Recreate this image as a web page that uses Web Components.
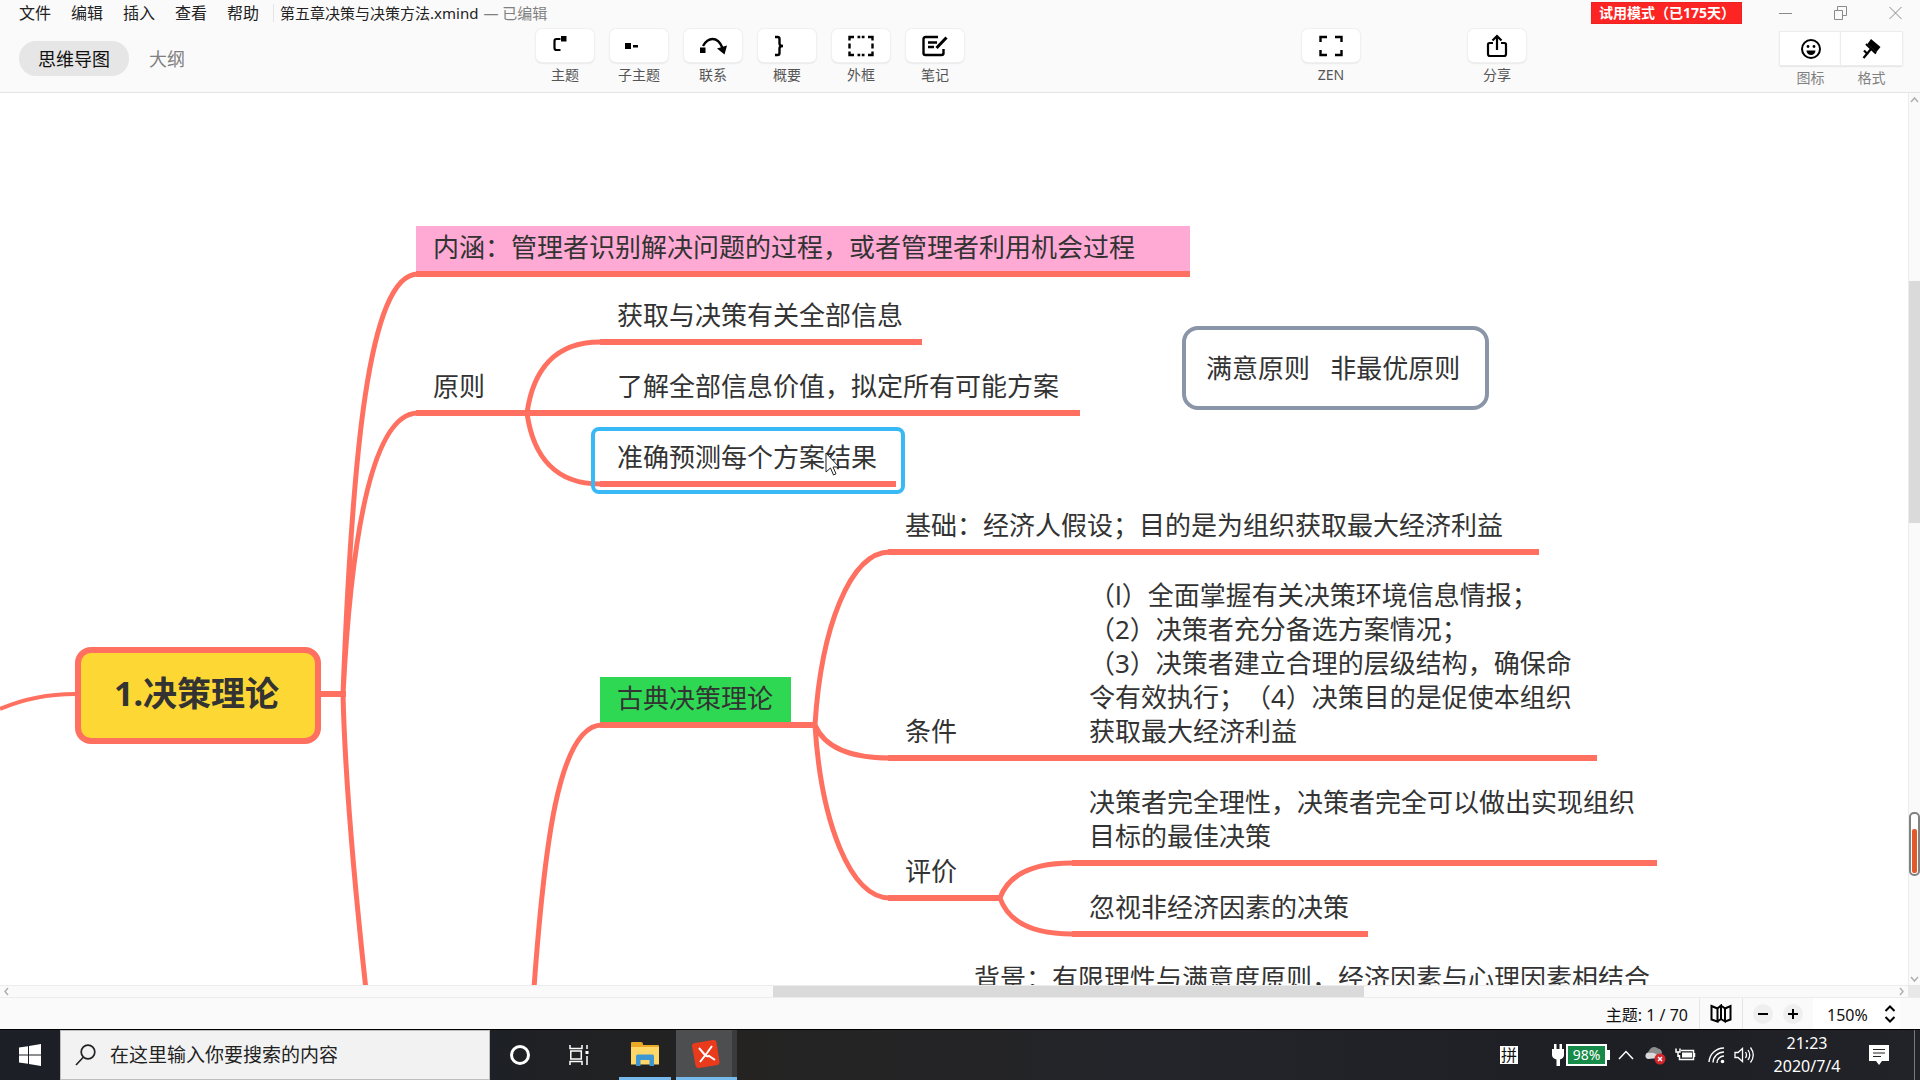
<!DOCTYPE html>
<html lang="zh-CN">
<head>
<meta charset="utf-8">
<title>第五章决策与决策方法.xmind</title>
<style>
html, body { margin: 0; height: 100%; overflow: hidden; }
body {
  font-family: "Noto Sans", "Noto Sans CJK SC", sans-serif;
  font-size: 16px;
  color: #222;
  text-spacing-trim: space-all;
}
</style>
</head>
<body>
<mind-app></mind-app>

<script>
const RESET = `
  *, *::before, *::after { box-sizing: border-box; }
  button, input, select { font: inherit; color: inherit; border: 0; background: none; padding: 0; margin: 0; border-radius: 0; outline: 0; }
  svg { display: block; flex: none; }
`;

function define(name, markup, setup) {
  const tpl = document.createElement('template');
  tpl.innerHTML = markup.replace('<style>', '<style>' + RESET);
  customElements.define(name, class extends HTMLElement {
    constructor() {
      super();
      this.attachShadow({ mode: 'open' }).append(tpl.content.cloneNode(true));
    }
    connectedCallback() { if (setup) setup(this, this.shadowRoot); }
  });
}

/* ---------- menu and title ---------- */
define('menu-bar', `
<style>
  :host { display: flex; align-items: center; height: 26px; padding-left: 19px; }
  nav { display: flex; gap: 20px; }
  button { line-height: 24px; white-space: nowrap; }
  .title { display: flex; gap: 5px; margin-left: 14px; padding-left: 6px; border-left: 1px solid #e4e4e4; font-size: 15px; line-height: 18px; white-space: nowrap; }
  .state { color: #808080; }
  .space { flex: 1; }
  .trial { width: 151px; padding-left: 7px; margin-right: 37px; background: #fd2424; border: 1px solid #e22; color: #fff; font-size: 14px; font-weight: 700; line-height: 20px; white-space: nowrap; }
  .win { display: flex; align-items: center; gap: 42px; padding-right: 18px; }
  .win svg { fill: none; stroke: #8a8a8a; stroke-width: 1; }
</style>
<nav aria-label="菜单">
  <button>文件</button><button>编辑</button><button>插入</button><button>查看</button><button>帮助</button>
</nav>
<div class="title"><span>第五章决策与决策方法.xmind</span><span class="state">— 已编辑</span></div>
<div class="space"></div>
<div class="trial">试用模式（已175天）</div>
<div class="win">
  <button aria-label="最小化"><svg width="13" height="14"><path d="M0 7.5H13"/></svg></button>
  <button aria-label="还原"><svg width="13" height="14"><path d="M.5 4.5h8v9h-8zM3.500 4.500v-4h9v9h-4"/></svg></button>
  <button aria-label="关闭"><svg width="13" height="14"><path d="M.5 1l12 12M12.500 1l-12 12"/></svg></button>
</div>
`);

/* ---------- toolbar ---------- */
define('view-tabs', `
<style>
  :host { display: flex; align-items: center; gap: 20px; font-size: 18px; margin-top: 12px; height: 35px; }
  button { line-height: 33px; padding-top: 2px; white-space: nowrap; color: #808080; }
  .on { width: 110px; border-radius: 17px; background: #e6e6e6; color: #111; }
</style>
<button class="on">思维导图</button><button>大纲</button>
`);

define('tool-button', `
<style>
  :host { display: flex; flex-direction: column; align-items: center; width: 58px; }
  button { display: flex; flex-direction: column; align-items: center; width: 100%; gap: 4px; }
  .face { display: flex; align-items: center; justify-content: center; width: 100%; height: 33px; background: #fff; border-radius: 6px; box-shadow: 0 0 0 1px #f0f0f0, 0 1px 2px #c8c8c8; }
  .label { font-size: 14px; line-height: 18px; color: #555; white-space: nowrap; }
  ::slotted(svg) { display: block; }
</style>
<button><span class="face"><slot name="icon"></slot></span><span class="label"><slot></slot></span></button>
`);

define('panel-switch', `
<style>
  :host { display: flex; margin-top: 3px; }
  button { width: 61px; display: flex; flex-direction: column; gap: 4px; }
  .face { display: flex; align-items: center; justify-content: center; width: 100%; height: 33px; background: #fff; box-shadow: 0 0 0 1px #ececec, 0 1px 2px #c4c4c4; }
  .label { width: 100%; text-align: center; font-size: 14px; line-height: 18px; color: #808080; }
</style>
<button><span class="face">
  <svg width="22" height="22" fill="none" stroke="#000" stroke-width="2"><circle cx="11" cy="11" r="9"/><path d="M6.500 12.500h9a4.500 4.500 0 0 1-9 0z" fill="#000" stroke="none"/><circle cx="8" cy="8.500" r="1.400" fill="#000" stroke="none"/><circle cx="14" cy="8.500" r="1.400" fill="#000" stroke="none"/></svg>
</span><span class="label">图标</span></button>
<button><span class="face">
  <svg width="22" height="22"><path d="M10 1l9.500 8-4.500 5.500L6.500 6z"/><path d="M5 6l10 9.500M10 11L2.500 20M3 12.500l4 4" fill="none" stroke="#000" stroke-width="2.200"/></svg>
</span><span class="label">格式</span></button>
`);

define('tool-bar', `
<style>
  :host { display: flex; align-items: flex-start; padding: 3px 18px 0 19px; height: 66px; }
  .group { display: flex; gap: 16px; }
  .s { flex: 1 1 0; }
  view-tabs { width: 166px; }
</style>
<view-tabs></view-tabs>
<div class="s" style="flex-grow:351"></div>
<div class="group">
  <tool-button><svg slot="icon" width="28" height="22" fill="none" stroke="#000" stroke-width="2.200"><path d="M9.500 4H5.500Q3.500 4 3.500 6v7q0 2 2 2h4"/><path d="M10 1h5.500v5.500H10z" fill="#000" stroke="none"/></svg>主题</tool-button>
  <tool-button><svg slot="icon" width="28" height="22"><path d="M0 8h6v6H0zM8 10h5v2.500H8z"/></svg>子主题</tool-button>
  <tool-button><svg slot="icon" width="28" height="22"><path d="M1 12.500h5.500v5.500H1z"/><path d="M4 11Q8 4 13.500 4 20 4 23.500 13" fill="none" stroke="#000" stroke-width="2.400"/><path d="M18 13.500l10-3-2.500 9z"/></svg>联系</tool-button>
  <tool-button><svg slot="icon" width="28" height="22" fill="none" stroke="#000" stroke-width="2.400"><path d="M2 2h2.500Q6.500 2 6.500 4v4.500Q6.500 11 10 11 6.500 11 6.500 13.500V18q0 2-2 2H2"/></svg>概要</tool-button>
  <tool-button><svg slot="icon" width="26" height="22" fill="none" stroke="#000" stroke-width="2.400"><path d="M1.500 5.500V2H6M9.500 2h7M20 2h4.500v3.500M24.500 8.500v5M24.500 16.500V20H20M16.500 20h-7M6 20H1.500v-3.500M1.500 13.500v-5"/><path d="M13 0v4M13 18v4" stroke="#fff" stroke-width="1.500"/></svg>外框</tool-button>
  <tool-button><svg slot="icon" width="26" height="22" fill="none" stroke="#000" stroke-width="2.400"><path d="M16 2H3.500Q1.500 2 1.500 4v14q0 2 2 2h16q2 0 2-2v-4"/><path d="M6 7.500h9M6 12h6"/><path d="M24.500 2.500L14.500 13" stroke-width="3"/></svg>笔记</tool-button>
</div>
<div class="s" style="flex-grow:338"></div>
<tool-button><svg slot="icon" width="24" height="22" fill="none" stroke="#000" stroke-width="2.400"><path d="M1.500 7V2H8M16 2h6.500v5M22.500 15v5H16M8 20H1.500v-5"/></svg>ZEN</tool-button>
<div class="s" style="flex-grow:108"></div>
<tool-button><svg slot="icon" width="22" height="24" fill="none" stroke="#000" stroke-width="2.200"><path d="M7 9H3.500Q2 9 2 10.500V20q0 2 2 2h14q2 0 2-2v-9.500Q20 9 18.500 9H15"/><path d="M11 16V2.500M6.500 6.500L11 2l4.500 4.500"/></svg>分享</tool-button>
<div class="s" style="flex-grow:254"></div>
<panel-switch></panel-switch>
`);

/* ---------- mind map canvas ---------- */
define('map-topic', `
<style>
  :host { display: block; position: absolute; box-sizing: border-box; color: #333; font-size: 26px; line-height: 34px; }
  .text { padding: 4px 0 7px var(--indent, 17px); white-space: pre; background: var(--fill, transparent); }
  .rule { height: 6px; background: #ff7060; }
</style>
<div class="text"><slot></slot></div><div class="rule"></div>
`, el => {
  el.style.left = el.getAttribute('x') + 'px';
  el.style.top = el.getAttribute('y') + 'px';
  el.style.width = el.getAttribute('w') + 'px';
});

define('mind-map', `
<style>
  :host { display: block; position: relative; overflow: hidden; background: #fff; flex: 1; min-width: 0; }
  .links { position: absolute; left: 0; top: 0; fill: none; stroke: #ff7060; stroke-width: 5; }
  .root, .float, .focus, .pointer { position: absolute; }
  .root { left: 75px; top: 554px; width: 246px; height: 97px; border: 6px solid #ff7060; border-radius: 16px; background: #fdd835; color: #333; font-size: 34px; font-weight: 700; line-height: 80px; padding-left: 33px; white-space: nowrap; }
  .float { left: 1182px; top: 233px; width: 307px; height: 84px; border: 4px solid #8a96a8; border-radius: 16px; color: #333; font-size: 26px; line-height: 76px; padding-left: 20px; white-space: pre; }
  .focus { left: 591px; top: 334px; width: 314px; height: 67px; border: 4px solid #38b8f5; border-radius: 8px; }
  .pointer { left: 825px; top: 359px; }
</style>
<svg class="links" width="1920" height="900">
  <path d="M0 616Q35 601 75 601" stroke-width="4"/>
  <path d="M320 601H346" stroke-width="6"/>
  <path d="M343 601C352 367 368 181 418 181M343 601C352 427 375 320 418 320M343 601C345 687 354 787 366 897"/>
  <path d="M527 320C533 277 555 249 600 249M527 320C533 363 555 391 600 391"/>
  <path d="M602 632C558 632 544 757 534 895"/>
  <path d="M815 632C821 535 850 459 890 459M815 632C823 651 845 665 890 665M815 632C821 729 850 805 890 805"/>
  <path d="M1000 805C1008 783 1030 770 1072 770M1000 805C1008 828 1030 841 1072 841"/>
  <path d="M791 632H817" stroke-width="6"/>
</svg>
<div class="root">1.决策理论</div>
<map-topic x="416" y="133" w="774" style="--fill:#ffaad5">内涵：管理者识别解决问题的过程，或者管理者利用机会过程</map-topic>
<map-topic x="416" y="272" w="112">原则</map-topic>
<map-topic x="600" y="201" w="322">获取与决策有关全部信息</map-topic>
<map-topic x="527" y="272" w="553" style="--indent:90px">了解全部信息价值，拟定所有可能方案</map-topic>
<map-topic x="600" y="343" w="296">准确预测每个方案结果</map-topic>
<div class="focus"></div>
<map-topic x="600" y="584" w="191" style="--fill:#2fd852">古典决策理论</map-topic>
<map-topic x="888" y="411" w="651">基础：经济人假设；目的是为组织获取最大经济利益</map-topic>
<map-topic x="888" y="617" w="190">条件</map-topic>
<map-topic x="1072" y="481" w="525">（l）全面掌握有关决策环境信息情报；
（2）决策者充分备选方案情况；
（3）决策者建立合理的层级结构，确保命
令有效执行；（4）决策目的是促使本组织
获取最大经济利益</map-topic>
<map-topic x="888" y="757" w="112">评价</map-topic>
<map-topic x="1072" y="688" w="585">决策者完全理性，决策者完全可以做出实现组织
目标的最佳决策</map-topic>
<map-topic x="1072" y="793" w="296">忽视非经济因素的决策</map-topic>
<map-topic x="957" y="864" w="720">背景：有限理性与满意度原则，经济因素与心理因素相结合</map-topic>
<div class="float">满意原则   非最优原则</div>
<svg class="pointer" width="16" height="24"><path d="M1 1v19l4.500-4 3 7 2.500-1.200-3-6.800h6z" fill="#fff" stroke="#222"/></svg>
`);

define('scroll-rail', `
<style>
  :host { display: flex; background: #fafafa; }
  :host([axis="y"]) { flex-direction: column; width: 12px; border-left: 1px solid #ececec; }
  :host([axis="x"]) { height: 12px; border-top: 1px solid #ececec; flex: 1; }
  svg { fill: none; stroke: #b0b0b0; stroke-width: 1.500; }
  i { display: block; flex-basis: 0; }
  .thumb { background: #dadada; }
</style>
<svg width="11" height="11"><path class="p"/></svg><i class="a"></i><i class="thumb"></i><i class="b"></i><svg width="11" height="11"><path class="n"/></svg>
`, (el, root) => {
  const vertical = el.getAttribute('axis') === 'y';
  root.querySelector('.p').setAttribute('d', vertical ? 'M2 9l3.500-4L9 9' : 'M8 2L5 5.500 8 9');
  root.querySelector('.n').setAttribute('d', vertical ? 'M2 3l3.500 4L9 3' : 'M3 2l3 3.500L3 9');
  const [a, t, b] = el.getAttribute('parts').split(' ');
  root.querySelector('.a').style.flexGrow = a;
  root.querySelector('.thumb').style.flexGrow = t;
  root.querySelector('.b').style.flexGrow = b;
});

define('level-gauge', `
<style>
  :host { display: block; position: absolute; box-sizing: border-box; right: 0; top: 719px; width: 11px; height: 64px; border: 2px solid #828282; border-radius: 5px; background: #fff; }
  i { position: absolute; left: 1px; right: 1px; top: 15px; bottom: 1px; border-radius: 2px; background: #e25a2b; }
</style>
<i></i>
`);

/* ---------- status bar ---------- */
define('status-bar', `
<style>
  :host { display: flex; align-items: stretch; justify-content: flex-end; height: 31px; padding-right: 20px; background: #fafafa; font-size: 16px; color: #111; }
  .count { line-height: 34px; padding-right: 11px; white-space: nowrap; }
  .map { display: flex; align-items: center; justify-content: center; width: 44px; border: solid #e6e6e6; border-width: 0 1px; }
  .zoom { display: flex; align-items: center; gap: 10px; padding: 0 10px; }
  .zoom button { width: 20px; height: 20px; border-radius: 10px; background: #efefef; }
  .level { position: relative; display: flex; background: #fff; width: 87px; }
  select { appearance: none; width: 100%; padding-left: 14px; line-height: 20px; padding-top: 3px; }
  .level svg { position: absolute; right: 4px; top: 7px; pointer-events: none; }
  svg { fill: none; stroke: #000; stroke-width: 2; }
</style>
<span class="count">主题: 1 / 70</span>
<button class="map" aria-label="导航图"><svg width="22" height="20"><path d="M1.500 2l6 2.500v13l-6-2zM7.500 4.500L11 1.500v13.500l-3.500 2.500M11 1.500l4 3v13L11 15M15 4.500l5.500-2.500v13.500l-5.500 2"/></svg></button>
<div class="zoom">
  <button aria-label="缩小"><svg width="20" height="20"><path d="M5 10h10"/></svg></button>
  <button aria-label="放大"><svg width="20" height="20"><path d="M5 10h10M10 5v10"/></svg></button>
</div>
<label class="level"><select aria-label="缩放"><option>150%</option></select>
<svg width="12" height="18"><path d="M1.500 6L6 1.500 10.500 6M1.500 12L6 16.500 10.500 12"/></svg></label>
`);

/* ---------- Windows task bar ---------- */
define('task-bar', `
<style>
  :host { display: flex; box-sizing: border-box; height: 51px; border-top: 1px solid #000; background: linear-gradient(90deg, #1c1f25 0, #1d2025 25%, #242322 38%, #24252a 60%, #1e1f24 85%, #222328 100%); color: #fff; align-items: stretch; }
  button { display: flex; align-items: center; justify-content: center; }
  .start { width: 60px; }
  .search { display: flex; align-items: center; width: 430px; background: #f2f2f2; border: 1px solid #bdbdbd; color: #222; padding-left: 14px; gap: 14px; }
  .search input { flex: 1; min-width: 0; font-size: 19px; line-height: 28px; }
  .search input::placeholder { color: #222; opacity: 1; }
  .cortana { width: 60px; }
  .view { width: 59px; }
  .app { width: 52px; margin-left: 10px; border-bottom: 3px solid #76b9ed; }
  .xmind { width: 61px; margin-left: 5px; padding-right: 2px; background: linear-gradient(90deg, #4d4e50 0 56px, #3a3b3d 56px); }
  .space { flex: 1; }
  .tray { display: flex; align-items: center; }
  .ime { width: 18px; height: 18px; background: #fff; color: #111; font-size: 16px; line-height: 18px; text-align: center; margin-right: 34px; }
  .plug { margin-right: 2px; }
  .bat { width: 41px; height: 22px; border: 2px solid #fff; background: #168a48; font-size: 14px; line-height: 18px; text-align: center; }
  .nub { width: 3px; height: 10px; background: #fff; margin-right: 8px; }
  .clock { width: 80px; margin-left: 11px; text-align: center; font-size: 16px; line-height: 23px; white-space: nowrap; }
  .note { margin-left: 22px; width: 20px; }
  .edge { width: 1px; align-self: stretch; background: #77787c; margin: 0 5px 0 25px; }
  .ln { fill: none; stroke: #fff; }
  .t8 { margin-left: 8px; }
  .t11 { margin-left: 11px; }
</style>
<button class="start" aria-label="开始"><svg width="22" height="22" fill="#fff"><path d="M0 3.500l9-1.300v8.300H0zM10 2l12-2v10.500H10zM0 11.500h9v8.300l-9-1.300zM10 11.500h12V22l-12-2z"/></svg></button>
<label class="search"><svg width="21" height="22" fill="none" stroke="#222" stroke-width="1.700"><circle cx="13" cy="8" r="6.800"/><path d="M8.500 13L1 21"/></svg><input type="text" aria-label="搜索" placeholder="在这里输入你要搜索的内容"></label>
<button class="cortana" aria-label="Cortana"><svg width="22" height="22" fill="none" stroke="#fff" stroke-width="3"><circle cx="11" cy="11" r="8.500"/></svg></button>
<button class="view" aria-label="任务视图"><svg class="ln" width="21" height="20" stroke-width="1.500"><path d="M1 0v3.500h12V0M1 20v-3.500h12V20M1.800 6h10.500v8H1.800zM18 0v4M18 11v9"/><path d="M16.500 6h3v3h-3z" fill="#fff" stroke="none"/></svg></button>
<button class="app" aria-label="文件资源管理器"><svg width="28" height="24"><path d="M0 1q0-1 1-1h9q2 0 2 2v1h15q1 0 1 1v18H0z" fill="#e9a927"/><path d="M0 5h28v17.500H0z" fill="#fdd868"/><path d="M5 24V14q0-1.500 1.500-1.500h15Q23 12.500 23 14v10h-4.500v-6h-9v6z" fill="#3d97d3"/></svg></button>
<button class="app xmind" aria-label="XMind"><svg width="30" height="28"><path d="M4 3L22 0q3-.5 3.500 2.500L28.500 22q.3 2.500-2 3L8 28q-3 .3-3.500-2.500L1 6q-.3-2.500 3-3z" fill="#ea3a1c"/><path d="M8 8l6 7q2 2 4 1l6 4M21 6l-5 7-7 9" fill="none" stroke="#fff" stroke-width="2"/></svg></button>
<div class="space"></div>
<div class="tray">
  <div class="ime">拼</div>
  <svg class="plug" width="12" height="22" fill="#fff"><path d="M2 0h2.500v5h3V0H10v5h2v6q0 3-4 4.500V22H4.500v-6.500Q0 14 0 11V5h2z"/></svg>
  <div class="bat">98%</div><div class="nub"></div>
  <svg class="ln" width="16" height="12" stroke-width="1.500"><path d="M1 10l7-7.500 7 7.500"/></svg>
  <svg class="t11" width="22" height="22"><path d="M4 14a4 4 0 0 1 0-7 5.500 5.500 0 0 1 9-2.500 4.500 4.500 0 0 1 4 5z" fill="#8d8d8d"/><path d="M3 15q-3-1-2.500-4T5 9q6-1 9 5z" fill="#d9d9d9"/><circle cx="15" cy="15" r="5.500" fill="#d3252c"/><path d="M13 13l4 4M17 13l-4 4" stroke="#fff" stroke-width="1.500"/></svg>
  <svg class="ln t8" width="22" height="16" stroke-width="1.500"><path d="M6 3.500h12.500v9H4.500V8M19.500 6v4M1 1.500v3.500h4V1.500M3 5v5"/><path d="M7 5.500h10v5H7z" fill="#fff" stroke="none"/></svg>
  <svg class="ln t11" width="18" height="18" stroke-width="1.400"><path d="M1 16A15 15 0 0 1 16 2M5 16.500A11 11 0 0 1 16 6M9 17a7 7 0 0 1 7-7"/><circle cx="14.500" cy="15.500" r="1.800" fill="#fff" stroke="none"/></svg>
  <svg class="ln t8" width="22" height="18" stroke-width="1.300"><path d="M1 6.500h3l4.500-4v13L4 11.500H1zM11.500 6q2 3 0 6M14 4q3.500 5 0 10M16.500 1.500q5.500 7.500 0 15"/></svg>
  <div class="clock"><div>21:23</div><div>2020/7/4</div></div>
  <svg class="note" width="20" height="20"><path d="M0 0h20v16h-7l-3 4-3-4H0z" fill="#fff"/><path d="M4 4.500h12M4 8h12M4 11.500h8" stroke="#222"/></svg>
  <div class="edge"></div>
</div>
`);

/* ---------- window ---------- */
define('mind-app', `
<style>
  :host { display: flex; flex-direction: column; height: 100vh; background: #fff; }
  header { background: #fafafa; border-bottom: 1px solid #e4e4e4; }
  main { flex: 1; min-height: 0; display: flex; position: relative; }
  .foot { display: flex; border-bottom: 1px solid #ececec; }
  .corner { width: 12px; background: #e8e8e8; }
</style>
<header><menu-bar></menu-bar><tool-bar></tool-bar></header>
<main><mind-map></mind-map><scroll-rail axis="y" parts="177 242 451"></scroll-rail><level-gauge></level-gauge></main>
<div class="foot"><scroll-rail axis="x" parts="762 591 533"></scroll-rail><div class="corner"></div></div>
<status-bar></status-bar>
<task-bar></task-bar>
`);
</script>
</body>
</html>
